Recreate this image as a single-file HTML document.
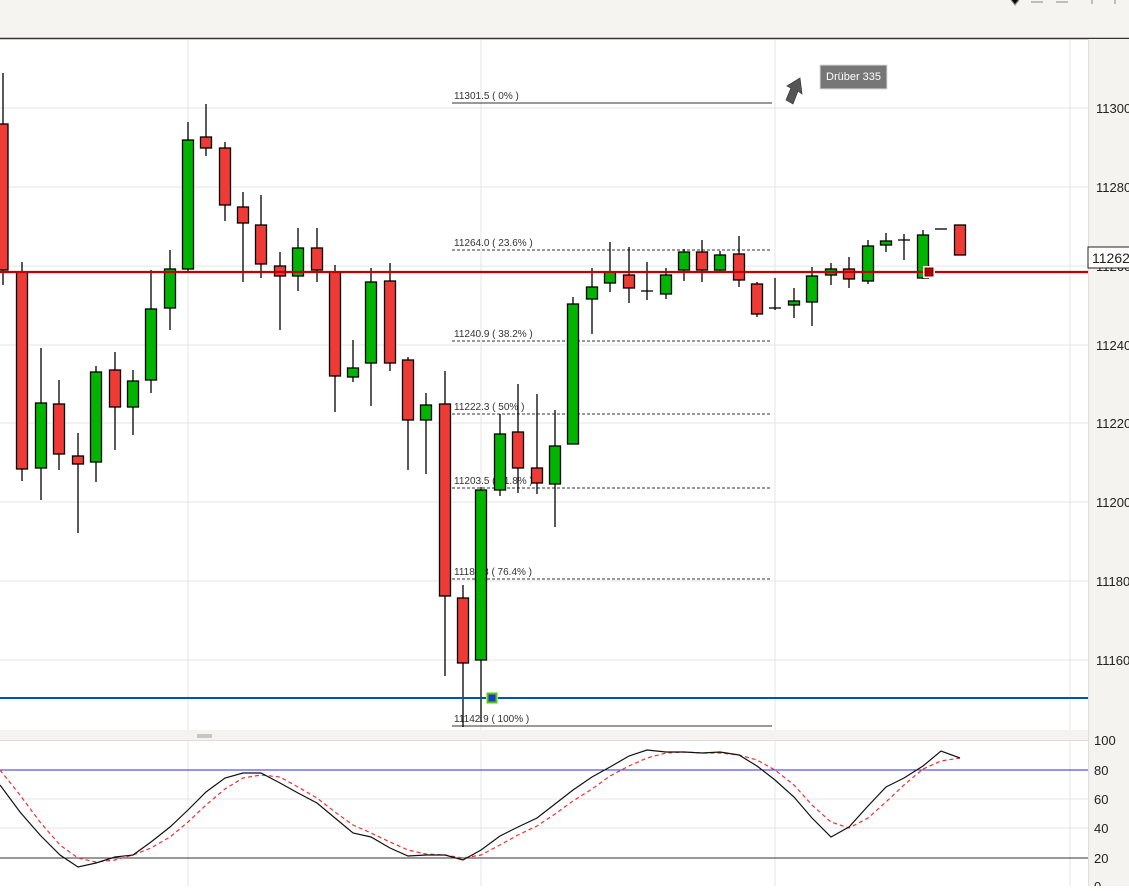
<!DOCTYPE html>
<html><head><meta charset="utf-8"><style>
html,body{margin:0;padding:0;background:#fff;}
body{width:1129px;height:886px;overflow:hidden;font-family:"Liberation Sans",sans-serif;}
</style></head><body>
<svg width="1129" height="886" xmlns="http://www.w3.org/2000/svg" font-family="Liberation Sans, sans-serif">
<rect x="0" y="0" width="1129" height="38" fill="#f5f4f1"/>
<line x1="0" y1="38.5" x2="1129" y2="38.5" stroke="#333" stroke-width="1.5"/>
<rect x="1088" y="39" width="41" height="847" fill="#f4f3f0"/>
<line x1="1088.5" y1="39" x2="1088.5" y2="886" stroke="#ddd"/>
<g stroke="#e4e4e4" stroke-width="1">
<line x1="188" y1="40" x2="188" y2="730"/><line x1="481" y1="40" x2="481" y2="730"/><line x1="775" y1="40" x2="775" y2="730"/><line x1="1070" y1="40" x2="1070" y2="730"/>
<line x1="188" y1="741" x2="188" y2="886"/><line x1="481" y1="741" x2="481" y2="886"/><line x1="775" y1="741" x2="775" y2="886"/><line x1="1070" y1="741" x2="1070" y2="886"/>
<line x1="0" y1="108" x2="1088" y2="108"/><line x1="0" y1="187" x2="1088" y2="187"/><line x1="0" y1="266" x2="1088" y2="266"/><line x1="0" y1="345" x2="1088" y2="345"/><line x1="0" y1="423" x2="1088" y2="423"/><line x1="0" y1="502" x2="1088" y2="502"/><line x1="0" y1="581" x2="1088" y2="581"/><line x1="0" y1="660" x2="1088" y2="660"/>
<line x1="0" y1="799" x2="1088" y2="799"/><line x1="0" y1="828" x2="1088" y2="828"/>
</g>
<g font-size="13" fill="#222">
<text x="1096" y="113">11300</text><text x="1096" y="192">11280</text><text x="1096" y="350">11240</text><text x="1096" y="428">11220</text><text x="1096" y="507">11200</text><text x="1096" y="586">11180</text><text x="1096" y="665">11160</text>
<text x="1096" y="271">11260</text>
</g>
<rect x="1088" y="247" width="42" height="21" fill="#fff" stroke="#222"/>
<text x="1092" y="263" font-size="14" fill="#222">11262</text>
<g stroke="#333" stroke-width="1">
<line x1="452" y1="103" x2="772" y2="103"/><line x1="452" y1="726" x2="772" y2="726"/>
<g stroke-dasharray="3,2"><line x1="452" y1="250" x2="772" y2="250"/><line x1="452" y1="341" x2="772" y2="341"/><line x1="452" y1="414" x2="772" y2="414"/><line x1="452" y1="488" x2="772" y2="488"/><line x1="452" y1="579" x2="772" y2="579"/></g>
</g>
<g font-size="10" fill="#333">
<text x="454" y="99">11301.5 ( 0% )</text><text x="454" y="246">11264.0 ( 23.6% )</text><text x="454" y="337">11240.9 ( 38.2% )</text><text x="454" y="410">11222.3 ( 50% )</text><text x="454" y="484">11203.5 ( 61.8% )</text><text x="454" y="575">11180.3 ( 76.4% )</text><text x="454" y="722">11142.9 ( 100% )</text>
</g>
<g stroke="#000" stroke-width="1.3">
<line x1="3" y1="73" x2="3" y2="285"/><line x1="22" y1="262" x2="22" y2="481"/><line x1="41" y1="348" x2="41" y2="500"/><line x1="59" y1="380" x2="59" y2="470"/><line x1="78" y1="433" x2="78" y2="533"/><line x1="96" y1="366" x2="96" y2="482"/><line x1="115" y1="352" x2="115" y2="450"/><line x1="133" y1="370" x2="133" y2="435"/><line x1="151" y1="270" x2="151" y2="393"/><line x1="170" y1="250" x2="170" y2="330"/><line x1="188" y1="122" x2="188" y2="272"/><line x1="206" y1="104" x2="206" y2="156"/><line x1="225" y1="142" x2="225" y2="221"/><line x1="243" y1="192" x2="243" y2="282"/><line x1="261" y1="195" x2="261" y2="278"/><line x1="280" y1="252" x2="280" y2="330"/><line x1="298" y1="228" x2="298" y2="291"/><line x1="317" y1="228" x2="317" y2="282"/><line x1="335" y1="265" x2="335" y2="412"/><line x1="353" y1="340" x2="353" y2="382"/><line x1="371" y1="268" x2="371" y2="406"/><line x1="390" y1="263" x2="390" y2="371"/><line x1="408" y1="357" x2="408" y2="470"/><line x1="426" y1="393" x2="426" y2="474"/><line x1="445" y1="371" x2="445" y2="676"/><line x1="463" y1="585" x2="463" y2="727"/><line x1="481" y1="487" x2="481" y2="722"/><line x1="500" y1="414" x2="500" y2="496"/><line x1="518" y1="384" x2="518" y2="493"/><line x1="537" y1="394" x2="537" y2="494"/><line x1="555" y1="410" x2="555" y2="527"/><line x1="573" y1="297" x2="573" y2="444"/><line x1="592" y1="268" x2="592" y2="334"/><line x1="610" y1="242" x2="610" y2="292"/><line x1="629" y1="247" x2="629" y2="303"/><line x1="647" y1="262" x2="647" y2="300"/><line x1="666" y1="268" x2="666" y2="299"/><line x1="684" y1="249" x2="684" y2="281"/><line x1="702" y1="240" x2="702" y2="282"/><line x1="720" y1="251" x2="720" y2="273"/><line x1="739" y1="236" x2="739" y2="287"/><line x1="757" y1="282" x2="757" y2="317"/><line x1="775" y1="278" x2="775" y2="310"/><line x1="794" y1="288" x2="794" y2="318"/><line x1="812" y1="267" x2="812" y2="326"/><line x1="831" y1="263" x2="831" y2="285"/><line x1="849" y1="257" x2="849" y2="288"/><line x1="868" y1="240" x2="868" y2="284"/><line x1="886" y1="233" x2="886" y2="252"/><line x1="904" y1="234" x2="904" y2="260"/><line x1="923" y1="230" x2="923" y2="279"/>
<line x1="898" y1="240" x2="910" y2="240"/><line x1="935" y1="229" x2="947" y2="229"/><line x1="641" y1="291" x2="653" y2="291"/><line x1="769" y1="308" x2="781" y2="308"/>
</g>
<g stroke="#000" stroke-width="1.3">
<g fill="#ee3b36">
<rect x="-3" y="124" width="11" height="146"/><rect x="16.5" y="272" width="11" height="197"/><rect x="53.5" y="404" width="11" height="50"/><rect x="72.5" y="456" width="11" height="8"/><rect x="109.5" y="370" width="11" height="37"/><rect x="200.5" y="137" width="11" height="11"/><rect x="219.5" y="148" width="11" height="57"/><rect x="237.5" y="207" width="11" height="16"/><rect x="255.5" y="225" width="11" height="39"/><rect x="274.5" y="266" width="11" height="10"/><rect x="311.5" y="248" width="11" height="22"/><rect x="329.5" y="272" width="11" height="104"/><rect x="384.5" y="281" width="11" height="82"/><rect x="402.5" y="360" width="11" height="60"/><rect x="439.5" y="404" width="11" height="192"/><rect x="457.5" y="598" width="11" height="65"/><rect x="512.5" y="432" width="11" height="36"/><rect x="531.5" y="468" width="11" height="15"/><rect x="623.5" y="275" width="11" height="13"/><rect x="696.5" y="252" width="11" height="18"/><rect x="733.5" y="254" width="11" height="26"/><rect x="751.5" y="284" width="11" height="30"/><rect x="843.5" y="269" width="11" height="10"/><rect x="954.5" y="225" width="11" height="30"/>
</g>
<g fill="#00b400">
<rect x="35.5" y="403" width="11" height="65"/><rect x="90.5" y="372" width="11" height="90"/><rect x="127.5" y="381" width="11" height="26"/><rect x="145.5" y="309" width="11" height="71"/><rect x="164.5" y="269" width="11" height="39"/><rect x="182.5" y="140" width="11" height="129"/><rect x="292.5" y="248" width="11" height="28"/><rect x="347.5" y="368" width="11" height="9"/><rect x="365.5" y="282" width="11" height="81"/><rect x="420.5" y="405" width="11" height="15"/><rect x="475.5" y="490" width="11" height="170"/><rect x="494.5" y="434" width="11" height="56"/><rect x="549.5" y="446" width="11" height="38"/><rect x="567.5" y="304" width="11" height="140"/><rect x="586.5" y="287" width="11" height="12"/><rect x="604.5" y="272" width="11" height="11"/><rect x="660.5" y="275" width="11" height="19"/><rect x="678.5" y="252" width="11" height="18"/><rect x="714.5" y="255" width="11" height="15"/><rect x="788.5" y="301" width="11" height="4"/><rect x="806.5" y="276" width="11" height="26"/><rect x="825.5" y="269" width="11" height="6"/><rect x="862.5" y="246" width="11" height="35"/><rect x="880.5" y="241" width="11" height="4"/><rect x="917.5" y="235" width="11" height="43"/>
</g>
</g>
<line x1="0" y1="272" x2="1088" y2="272" stroke="#c00000" stroke-width="2.2"/>
<rect x="923" y="266" width="12" height="12" fill="#fff"/><rect x="925" y="268" width="8" height="8" fill="#b00000" stroke="#700" stroke-width="1"/>
<line x1="0" y1="698" x2="1088" y2="698" stroke="#0053b0" stroke-width="2"/>
<rect x="486" y="692" width="12" height="12" fill="#fff"/><rect x="487.5" y="693.5" width="9" height="9" fill="#1a3ccc" stroke="#5bc800" stroke-width="2"/>
<rect x="820" y="65" width="67" height="24" fill="#777" stroke="#ddd"/>
<text x="826" y="80" font-size="11" fill="#fff">Drüber 335</text>
<path d="M786 100 L791 88 L787 86 L800 78 L802 94 L798 91 L793 104 Z" fill="#555" stroke="#333" stroke-width="0.7"/>
<rect x="0" y="730" width="1088" height="10" fill="#f4f3f0"/>
<line x1="0" y1="740.5" x2="1088" y2="740.5" stroke="#ddd"/>
<line x1="197" y1="735" x2="212" y2="735" stroke="#999"/><line x1="197" y1="737" x2="212" y2="737" stroke="#999"/>
<line x1="0" y1="770" x2="1088" y2="770" stroke="#2b2bd6"/>
<line x1="0" y1="858" x2="1088" y2="858" stroke="#333"/>
<g font-size="13" fill="#222">
<text x="1094" y="745">100</text><text x="1094" y="775">80</text><text x="1094" y="804">60</text><text x="1094" y="833">40</text><text x="1094" y="863">20</text><text x="1094" y="891">0</text>
</g>
<polyline fill="none" stroke="#f03030" stroke-width="1.2" stroke-dasharray="4,3" points="0,770 20,795 40,822 60,845 78,858 96,862 115,860 133,855 151,848 170,837 188,822 206,805 225,789 243,778 261,775 280,777 298,787 317,798 335,812 353,825 371,833 390,842 408,850 426,854 445,855 463,858 481,855 500,845 518,835 537,826 555,814 573,801 592,789 610,776 629,766 647,758 666,753 684,752 702,753 720,753 739,755 757,760 775,770 794,785 812,805 831,822 849,828 868,818 886,802 904,785 923,769 941,761 960,758"/>
<polyline fill="none" stroke="#111" stroke-width="1.2" points="0,785 20,812 40,835 60,855 78,867 96,863 115,857 133,855 151,842 170,827 188,810 206,792 225,778 243,773 261,773 280,783 298,793 317,803 335,818 353,833 371,837 390,848 408,856 426,855 445,855 463,860 481,850 500,836 518,827 537,818 555,804 573,790 592,777 610,767 629,756 647,750 666,752 684,752 702,753 720,752 739,755 757,766 775,780 794,797 812,818 831,837 849,827 868,806 886,787 904,778 923,766 941,751 960,758"/>
<g stroke="#999" stroke-width="1.2"><path d="M1011 0 L1015 5 L1019 0"/><line x1="1031" y1="2" x2="1043" y2="2"/><line x1="1056" y1="2" x2="1068" y2="2"/><line x1="1092" y1="0" x2="1092" y2="4"/><line x1="1115" y1="0" x2="1115" y2="4"/></g>
</svg>
</body></html>
